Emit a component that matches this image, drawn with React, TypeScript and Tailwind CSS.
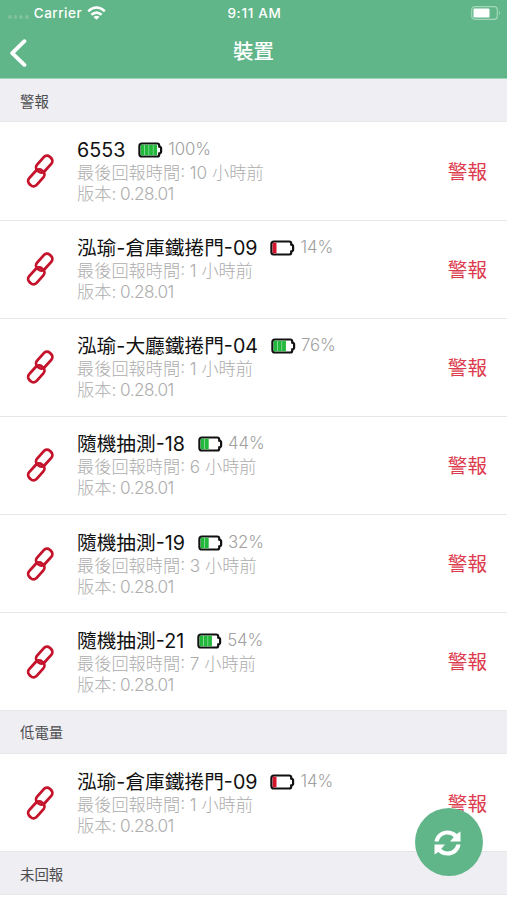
type Device = {
    name: string;
    battery: number;
    bars: number;
    hours: number;
};

const alarms: Device[] = [
    { name: '6553', battery: 100, bars: 4, hours: 10 },
    { name: '泓瑜-倉庫鐵捲門-09', battery: 14, bars: 1, hours: 1 },
    { name: '泓瑜-大廳鐵捲門-04', battery: 76, bars: 3, hours: 1 },
    { name: '隨機抽測-18', battery: 44, bars: 2, hours: 6 },
    { name: '隨機抽測-19', battery: 32, bars: 2, hours: 3 },
    { name: '隨機抽測-21', battery: 54, bars: 3, hours: 7 },
];

const lowBattery: Device[] = [{ name: '泓瑜-倉庫鐵捲門-09', battery: 14, bars: 1, hours: 1 }];

function ChainIcon() {
    return (
        <svg width="28" height="34" viewBox="0 0 28 34" fill="none" stroke="#c4132b" strokeWidth="2.8">
            <rect x="-9.2" y="-5" width="18.4" height="10" rx="4.2" transform="translate(18.2 10.2) rotate(-48)" />
            <rect x="-9.2" y="-5" width="18.4" height="10" rx="4.2" transform="translate(10.3 23.8) rotate(-48)" />
        </svg>
    );
}

function BatteryIcon({ bars, low }: { bars: number; low: boolean }) {
    return (
        <svg width="25" height="16" viewBox="0 0 25 16" fill="none">
            <path
                d="M4 1.5h15.2q2 0 2 1.8v1.3q1.9.3 1.9 1.7v3.4q0 1.4-1.9 1.7v1.3q0 1.8-2 1.8H4q-2.6 0-2.6-2.6V4.1q0-2.6 2.6-2.6z"
                fill="#fff"
                stroke="#111"
                strokeWidth="2.2"
            />
            {Array.from({ length: bars }, (_, i) => (
                <rect key={i} x={2.7 + i * 4.2} y="2.7" width="3.8" height="10.6" fill={low ? '#d5142b' : '#21b83b'} />
            ))}
        </svg>
    );
}

function SectionTitle({ title }: { title: string }) {
    return (
        <div className="h-[43px] shrink-0 bg-[#eeeef3] border-b border-[#e7e7ea] px-5 pt-0.5 flex items-center text-[14.4px] text-[#4d4d50]">
            {title}
        </div>
    );
}

function DeviceRow({ device }: { device: Device }) {
    return (
        <div className="h-[98.15px] shrink-0 bg-white border-b border-[#e6e6e9] flex items-center pl-[26px] pr-5">
            <ChainIcon />
            <div className="ml-[23px] flex-1 whitespace-nowrap">
                <div className="flex items-center h-[24px]">
                    <span className="text-[19.7px] leading-[24px] text-[#111]">{device.name}</span>
                    <span className="ml-[12.5px]">
                        <BatteryIcon bars={device.bars} low={device.battery < 20} />
                    </span>
                    <span className="ml-[5.5px] -mt-0.5 text-[16.8px] leading-[24px] tracking-[-0.1px] font-light text-[#a0a0a0]">{device.battery}%</span>
                </div>
                <div className="text-[17.2px] leading-[21px] font-light text-[#adadad]">最後回報時間: {device.hours} 小時前</div>
                <div className="text-[17.2px] leading-[21px] font-light text-[#adadad]">
                    版本: <span className="-ml-px tracking-[-0.55px]">0.28.01</span>
                </div>
            </div>
            <span className="mt-[3px] text-[19.6px] text-[#dc3b4d]">警報</span>
        </div>
    );
}

export default function App() {
    return (
        <div className="relative w-full h-[900px] overflow-hidden bg-white flex flex-col font-['Inter','Noto_Sans_CJK_TC',sans-serif]">
            <header className="h-[79.4px] shrink-0 bg-[#61b689] border-b border-[#9bd3b4] text-white">
                <div className="h-[26px] grid grid-cols-3 items-center pl-2 pr-1.5 text-[13.5px] font-medium">
                    <div className="flex items-center">
                        <div className="flex gap-[2px] mr-[5px] mt-2">
                            {[1, 2, 3, 4].map(i => (
                                <span key={i} className="size-[3.7px] rounded-full bg-[#80c29f]" />
                            ))}
                        </div>
                        <span className="tracking-[0.5px]">Carrier</span>
                        <svg className="ml-[5px]" width="19" height="14" viewBox="0 0 19 14" fill="none" stroke="#fff" strokeWidth="2.6">
                            <path d="M1.2 5.2q8.3-7.4 16.6 0" />
                            <path d="M4.4 8.7q5.1-4.3 10.2 0" />
                            <path d="M9.5 13.8 6.5 10.9q3-2.2 6 0z" fill="#fff" stroke="none" />
                        </svg>
                    </div>
                    <div className="text-center tracking-[0.7px]">9:11 AM</div>
                    <svg className="justify-self-end" width="30" height="14" viewBox="0 0 30 14" fill="none">
                        <rect x="0.7" y="0.7" width="25.6" height="12.6" rx="3" stroke="#a5d6bb" strokeWidth="1.2" />
                        <rect x="2.5" y="2.4" width="16" height="9.2" rx="1.2" fill="#fff" />
                        <path d="M28 4.8q2 2.2 0 4.4z" fill="#a5d6bb" />
                    </svg>
                </div>
                <div className="h-[53px] grid grid-cols-3 items-center pl-[9px] pr-[9px]">
                    <svg width="18" height="28" viewBox="0 0 18 28" fill="none" stroke="#fff" strokeWidth="3.9" strokeLinecap="round" strokeLinejoin="round">
                        <path d="M15.4 2.2 3.2 14.1l12.2 11.7" />
                    </svg>
                    <h1 className="text-center text-[20.5px] font-medium">裝置</h1>
                </div>
            </header>

            <SectionTitle title="警報" />
            {alarms.map(device => (
                <DeviceRow key={device.name} device={device} />
            ))}
            <SectionTitle title="低電量" />
            {lowBattery.map(device => (
                <DeviceRow key={device.name} device={device} />
            ))}
            <SectionTitle title="未回報" />

            <button className="absolute left-[415px] top-[808px] size-[68px] rounded-full bg-[#61b689] flex items-center justify-center">
                <svg className="-ml-1 mt-0.5" width="27" height="26" viewBox="0 0 27 26" fill="#fff">
                    <path d="M.5 11.5C1.5 4.500 7.200.4 13.500.4c3.600 0 6.800 1.300 9.200 3.600L26.500 1.500V11.500H16l3.700-4.200c-1.600-1.700-3.700-2.700-6.200-2.700-4.400 0-7.600 2.500-8.800 6.900z" />
                    <path d="M26.500 14.500c-1 7-6.700 11.100-13 11.100-3.600 0-6.800-1.300-9.200-3.600L.5 24.500V14.500H11l-3.700 4.200c1.600 1.700 3.700 2.700 6.200 2.700 4.400 0 7.600-2.500 8.800-6.900z" />
                </svg>
            </button>
        </div>
    );
}
